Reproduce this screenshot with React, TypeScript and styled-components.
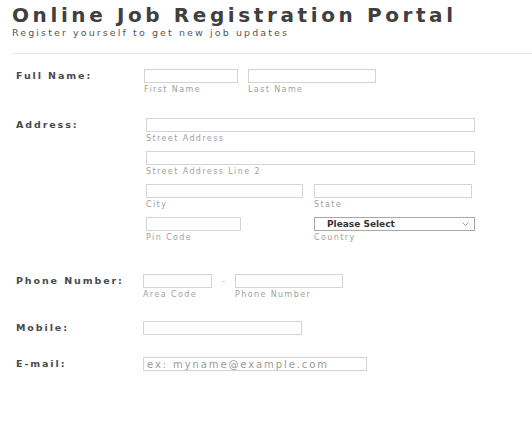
import styled, { createGlobalStyle } from 'styled-components'

const GlobalStyle = createGlobalStyle`
  body {
    margin: 0;
    background: #fff;
    font-family: "DejaVu Sans", "Liberation Sans", sans-serif;
  }
`

const App: React.FunctionComponent = () => {
  return (
    <Page>
      <GlobalStyle />
      <Title>Online Job Registration Portal</Title>
      <Subtitle>Register yourself to get new job updates</Subtitle>
      <Divider />
      <Form>
        <Row $gap={23}>
          <Label>Full Name:</Label>
          <Line $gap={10}>
            <Field $w={94}>
              <Box />
              <Hint>First Name</Hint>
            </Field>
            <Field $w={128}>
              <Box />
              <Hint>Last Name</Hint>
            </Field>
          </Line>
        </Row>

        <Row $gap={31}>
          <Label>Address:</Label>
          <Controls $offset={2}>
            <Field $w={329}>
              <Box />
              <Hint>Street Address</Hint>
            </Field>
            <Field $w={329}>
              <Box />
              <Hint>Street Address Line 2</Hint>
            </Field>
            <Pair>
              <Field $w={157}>
                <Box />
                <Hint>City</Hint>
              </Field>
              <Field $w={158}>
                <Box />
                <Hint>State</Hint>
              </Field>
            </Pair>
            <Pair>
              <Field $w={95}>
                <Box />
                <Hint>Pin Code</Hint>
              </Field>
              <Field $w={161}>
                <SelectWrap>
                  <Select defaultValue="">
                    <option value="">Please Select</option>
                    <option value="in">India</option>
                    <option value="us">United States</option>
                    <option value="uk">United Kingdom</option>
                  </Select>
                  <Chevron width="7" height="4" viewBox="0 0 7 4">
                    <polyline points="0.5,0.5 3.5,3.5 6.5,0.5" fill="none" stroke="#9a9a9a" strokeWidth="1" />
                  </Chevron>
                </SelectWrap>
                <Hint>Country</Hint>
              </Field>
            </Pair>
          </Controls>
        </Row>

        <Row $gap={21}>
          <Label>Phone Number:</Label>
          <Line $gap={0} $offset={-1}>
            <Field $w={69}>
              <Box />
              <Hint>Area Code</Hint>
            </Field>
            <Dash>-</Dash>
            <Field $w={108}>
              <Box />
              <Hint>Phone Number</Hint>
            </Field>
          </Line>
        </Row>

        <Row $gap={22}>
          <Label>Mobile:</Label>
          <Line $offset={-1}>
            <Field $w={159}>
              <Box />
            </Field>
          </Line>
        </Row>

        <Row>
          <Label>E-mail:</Label>
          <Line $offset={-1}>
            <Field $w={224}>
              <Box type="email" placeholder="ex: myname@example.com" />
            </Field>
          </Line>
        </Row>
      </Form>
    </Page>
  )
}

const Page = styled.div`
  padding: 4px 0 0 12px;
`

const Title = styled.h1`
  margin: 0;
  font-family: "DejaVu Sans", "Liberation Sans", sans-serif;
  font-weight: bold;
  font-size: 20px;
  line-height: 22px;
  letter-spacing: 3.6px;
  color: #404040;
  white-space: nowrap;
`

const Subtitle = styled.p`
  margin: 2px 0 0;
  font-size: 9.5px;
  line-height: 9px;
  letter-spacing: 2.1px;
  color: #555;
`

const Divider = styled.hr`
  margin: 16px 0 0;
  border: 0;
  border-top: 1px solid #ebebeb;
`

const Form = styled.form`
  padding: 15px 0 0 4px;
`

const Row = styled.div<{ $gap?: number }>`
  display: grid;
  grid-template-columns: 128px auto;
  align-items: start;
  margin-bottom: ${p => p.$gap ?? 24}px;
`

const Label = styled.label`
  font-weight: bold;
  font-size: 9.5px;
  line-height: 14px;
  letter-spacing: 1.9px;
  color: #4a4a4a;
  white-space: nowrap;
`

const Controls = styled.div<{ $offset?: number }>`
  display: flex;
  flex-direction: column;
  gap: 7px;
  margin-left: ${p => p.$offset ?? 0}px;
`

const Line = styled.div<{ $gap?: number; $offset?: number }>`
  display: flex;
  align-items: flex-start;
  gap: ${p => p.$gap ?? 10}px;
  margin-left: ${p => p.$offset ?? 0}px;
`

const Pair = styled.div`
  display: grid;
  grid-template-columns: 157px 161px;
  column-gap: 11px;
  align-items: start;
`

const Field = styled.div<{ $w: number }>`
  display: flex;
  flex-direction: column;
  width: ${p => p.$w}px;
`

const Box = styled.input`
  box-sizing: border-box;
  width: 100%;
  height: 14px;
  margin: 0;
  padding: 0 3px;
  border: 1px solid #d4d4d4;
  border-radius: 0;
  outline: none;
  background: #fff;
  font-family: "DejaVu Sans", "Liberation Sans", sans-serif;
  font-size: 10px;
  letter-spacing: 1.9px;
  color: #333;

  &::placeholder {
    color: #9a9a9a;
  }
`

const Hint = styled.span`
  margin-top: 2px;
  font-size: 8px;
  line-height: 10px;
  letter-spacing: 1.4px;
  color: #a0a0a0;
  white-space: nowrap;
`

const Dash = styled.span`
  width: 23px;
  text-align: center;
  font-size: 9px;
  line-height: 14px;
  color: #bbb;
`

const SelectWrap = styled.div`
  position: relative;
  width: 100%;
`

const Select = styled.select`
  appearance: none;
  box-sizing: border-box;
  display: block;
  width: 100%;
  height: 14px;
  margin: 0;
  padding: 0 0 0 12px;
  border: 1px solid #a8a8a8;
  border-radius: 0;
  background: #fff;
  outline: none;
  font-family: "DejaVu Sans", "Liberation Sans", sans-serif;
  font-weight: bold;
  font-size: 9px;
  line-height: 12px;
  color: #333;
`

const Chevron = styled.svg`
  position: absolute;
  right: 6px;
  top: 5px;
`

export default App
